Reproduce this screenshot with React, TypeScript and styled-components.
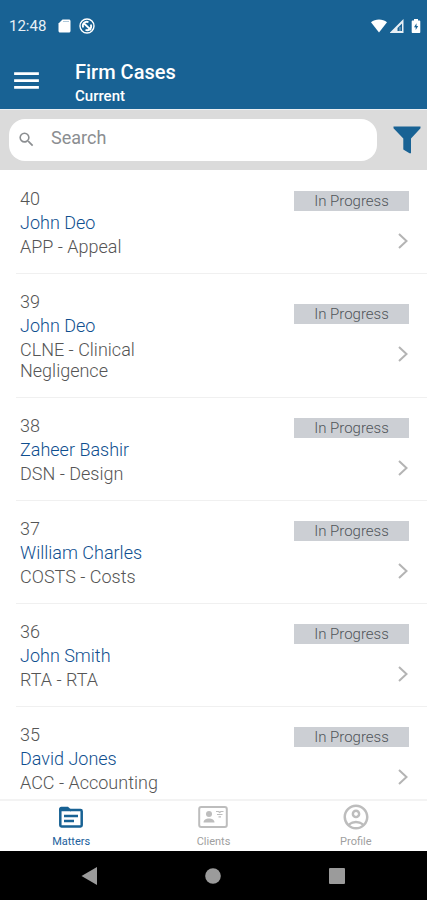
import React from "react";
import styled, { createGlobalStyle } from "styled-components";
import { MdMenu, MdSearch, MdOutlineAccountCircle } from "react-icons/md";

const blue = "#186294";

const GlobalStyle = createGlobalStyle`
  *, *::before, *::after { box-sizing: border-box; }
  body { margin: 0; background: #fff; font-family: Roboto, "Liberation Sans", sans-serif; }
  button { border: 0; padding: 0; margin: 0; background: none; font: inherit; color: inherit; cursor: pointer; }
  svg { display: block; }
`;

const Screen = styled.div`
  display: flex;
  flex-direction: column;
  height: 100vh;
  background: #fff;
`;

const StatusBar = styled.div`
  display: flex;
  align-items: center;
  flex: none;
  height: 52px;
  padding: 0 6px 0 9px;
  background: ${blue};
  color: #fff;
`;

const Clock = styled.time`
  font-size: 15px;
  line-height: 20px;
  color: #e8f0f6;
  margin-right: 12px;
`;

const StatusIcons = styled.div<{ $end?: boolean }>`
  display: flex;
  align-items: center;
  gap: ${(p) => (p.$end ? 3 : 8)}px;
  margin-left: ${(p) => (p.$end ? "auto" : "0")};
`;

const AppBar = styled.header`
  display: flex;
  align-items: center;
  flex: none;
  height: 57px;
  padding: 0 10px;
  gap: 32px;
  background: ${blue};
  color: #fff;
`;

const Titles = styled.div`
  display: flex;
  flex-direction: column;
  padding-top: 4px;
  gap: 2px;
`;

const Title = styled.h1`
  margin: 0;
  font-size: 20px;
  line-height: 24px;
  font-weight: 500;
`;

const Subtitle = styled.p`
  margin: 0;
  font-size: 15px;
  line-height: 20px;
  font-weight: 500;
`;

const SearchBar = styled.form`
  display: flex;
  align-items: center;
  flex: none;
  height: 61px;
  padding: 0 6px 1px 9px;
  gap: 16px;
  background: #dbdbdb;
  border-top: 1px solid #e9eef2;
`;

const SearchField = styled.label`
  display: flex;
  align-items: center;
  flex: 1;
  min-width: 0;
  height: 42px;
  padding: 0 16px 0 8px;
  gap: 15px;
  border-radius: 16px;
  background: #fff;
  color: #8b8e91;
`;

const SearchInput = styled.input`
  flex: 1;
  min-width: 0;
  height: 26px;
  padding: 0 0 4px;
  border: 0;
  outline: 0;
  background: none;
  font: 18px Roboto, "Liberation Sans", sans-serif;
  color: #555;
  &::placeholder { color: #8b8e91; opacity: 1; }
`;

const FilterButton = styled.button`
  color: ${blue};
`;

const CaseList = styled.ul`
  flex: 1;
  min-height: 0;
  margin: 0;
  padding: 1px 0 0;
  list-style: none;
  overflow-y: auto;
  scrollbar-width: none;
`;

const CaseRow = styled.li`
  display: flex;
  align-items: center;
  justify-content: space-between;
  margin-left: 16px;
  padding: 17px 18px 16px 4px;
  border-bottom: 1px solid #f0f0f0;
`;

const CaseInfo = styled.div`
  display: flex;
  flex-direction: column;
  gap: 3px;
  width: 144px;
`;

const CaseLine = styled.span<{ $client?: boolean }>`
  font-size: 18px;
  font-weight: 300;
  line-height: 21px;
  color: ${(p) => (p.$client ? "#0f4f8f" : "#555")};
`;

const CaseSide = styled.div`
  display: flex;
  flex-direction: column;
  align-items: flex-end;
  gap: 18px;
  padding-bottom: 2px;
`;

const Badge = styled.span`
  width: 115px;
  height: 20px;
  background: #cccfd4;
  color: #50555a;
  font-size: 15px;
  font-weight: 300;
  line-height: 21px;
  text-align: center;
`;

const OpenButton = styled.button`
  color: #b4b4b4;
`;

const TabBar = styled.nav`
  display: grid;
  grid-template-columns: repeat(3, 1fr);
  flex: none;
  height: 52px;
  border-top: 2px solid #f3f3f3;
  background: #fff;
`;

const Tab = styled.button<{ $active?: boolean }>`
  display: flex;
  flex-direction: column;
  align-items: center;
  padding-top: 1px;
  gap: 2px;
  font-size: 11px;
  line-height: 16px;
  color: ${(p) => (p.$active ? "#21609c" : "#a0a0a0")};
  svg { color: ${(p) => (p.$active ? blue : "#bdbdbd")}; }
`;

const SystemBar = styled.div`
  display: flex;
  align-items: center;
  justify-content: space-between;
  flex: none;
  height: 49px;
  padding: 0 81px;
  background: #000;
  color: #9b9b9b;
`;

const CardIcon = () => (
  <svg width="13" height="14" viewBox="0 0 13 14">
    <path d="M4.500.5H11c.8 0 1.500.7 1.500 1.500v10c0 .8-.7 1.500-1.500 1.500H2c-.8 0-1.500-.7-1.500-1.500V4.500z" fill="#fff" />
    <path d="M5 2.500h6" stroke={blue} strokeOpacity=".35" />
  </svg>
);

const FocusIcon = () => (
  <svg width="16" height="16" viewBox="0 0 16 16" fill="none" stroke="#fff">
    <circle cx="8" cy="8" r="7" strokeWidth="1.400" />
    <path d="M4.200 9.500A4 4 0 0 1 9.500 4.200M11.800 6.500A4 4 0 0 1 6.500 11.800" strokeWidth="1.800" />
    <path d="M4.500 5l7.500 7" strokeWidth="1.800" />
  </svg>
);

const WifiIcon = () => (
  <svg width="16" height="14" viewBox="0 0 16 14" fill="#fff">
    <path d="M0 3.200C2.200 1.400 5 .4 8 .4s5.800 1 8 2.800L8 13.400z" />
  </svg>
);

const SignalIcon = () => (
  <svg width="18" height="14" viewBox="0 0 18 14">
    <path d="M13.500 0v14H-.5z" fill="#fff" fillOpacity=".9" />
    <path d="M12 4.500V12H7.500V9z" fill={blue} />
    <path d="M10 8v4" stroke="#fff" strokeOpacity=".5" />
  </svg>
);

const BatteryIcon = () => (
  <svg width="10" height="14" viewBox="0 0 10 14">
    <path d="M3 0h4v1.500h1.300c.6 0 1 .4 1 1V13c0 .6-.4 1-1 1H1.700c-.6 0-1-.4-1-1V2.500c0-.6.4-1 1-1H3z" fill="#fff" />
    <path d="M5.500 4.200L3 8.300h1.700v2.700L7.200 7H5.500z" fill={blue} />
  </svg>
);

const FilterIcon = () => (
  <svg width="28" height="28" viewBox="0 0 28 28" fill="currentColor">
    <path d="M.5.500h27v1.800L18 12.500V27.300h-1.500L10.300 23.500v-11L.5 2.300z" />
  </svg>
);

const ChevronIcon = () => (
  <svg width="12" height="24" viewBox="0 0 12 24" fill="none" stroke="currentColor" strokeWidth="2">
    <path d="M2 5l7.500 7L2 19" />
  </svg>
);

const FolderIcon = () => (
  <svg width="30" height="30" viewBox="0 0 30 30" fill="none" stroke="currentColor">
    <path d="M4.300 8v15.200c0 .7.500 1.200 1.200 1.200h19c.7 0 1.200-.5 1.200-1.200V9.200c0-.7-.5-1.200-1.200-1.200H14" strokeWidth="2.500" />
    <path d="M3 9.300V7c0-1.300 1-2.300 2.300-2.300H12l3 2.700v1.900z" fill="currentColor" stroke="none" />
    <path d="M8 14h14M8 19h10" strokeWidth="2.300" />
  </svg>
);

const ContactCardIcon = () => (
  <svg width="30" height="30" viewBox="0 0 30 30" fill="currentColor">
    <rect x="1.200" y="5" width="27.600" height="20" rx="2" fill="none" stroke="currentColor" strokeWidth="2" />
    <circle cx="11" cy="12" r="3" />
    <path d="M5.500 20.500c0-2.600 2.700-4 5.500-4s5.500 1.400 5.500 4z" />
    <path d="M18 9.500h2.500l1.200 1 1.200-1H25.500M19 12.500h5.500M20.500 14.800h2.500" fill="none" stroke="currentColor" strokeWidth="1.200" />
  </svg>
);

const BackIcon = () => (
  <svg width="17" height="18" viewBox="0 0 17 18" fill="currentColor">
    <path d="M16 0v18L.5 9z" />
  </svg>
);

const HomeIcon = () => (
  <svg width="16" height="16" viewBox="0 0 16 16" fill="currentColor">
    <circle cx="8" cy="8" r="7.800" />
  </svg>
);

const RecentsIcon = () => (
  <svg width="18" height="18" viewBox="0 0 18 18" fill="currentColor">
    <rect x="1" y="1" width="16" height="16" rx="1" />
  </svg>
);

const cases = [
  { id: 40, client: "John Deo", matter: "APP - Appeal" },
  { id: 39, client: "John Deo", matter: "CLNE - Clinical Negligence" },
  { id: 38, client: "Zaheer Bashir", matter: "DSN - Design" },
  { id: 37, client: "William Charles", matter: "COSTS - Costs" },
  { id: 36, client: "John Smith", matter: "RTA - RTA" },
  { id: 35, client: "David Jones", matter: "ACC - Accounting" },
];

export default function App() {
  return (
    <Screen>
      <GlobalStyle />
      <StatusBar>
        <Clock>12:48</Clock>
        <StatusIcons>
          <CardIcon />
          <FocusIcon />
        </StatusIcons>
        <StatusIcons $end>
          <WifiIcon />
          <SignalIcon />
          <BatteryIcon />
        </StatusIcons>
      </StatusBar>
      <AppBar>
        <button type="button" aria-label="Menu">
          <MdMenu size={33} />
        </button>
        <Titles>
          <Title>Firm Cases</Title>
          <Subtitle>Current</Subtitle>
        </Titles>
      </AppBar>
      <SearchBar onSubmit={(e) => e.preventDefault()}>
        <SearchField>
          <MdSearch size={19} aria-hidden />
          <SearchInput type="text" placeholder="Search" aria-label="Search" />
        </SearchField>
        <FilterButton type="button" aria-label="Filter">
          <FilterIcon />
        </FilterButton>
      </SearchBar>
      <CaseList>
        {cases.map((c) => (
          <CaseRow key={c.id}>
            <CaseInfo>
              <CaseLine>{c.id}</CaseLine>
              <CaseLine $client>{c.client}</CaseLine>
              <CaseLine>{c.matter}</CaseLine>
            </CaseInfo>
            <CaseSide>
              <Badge>In Progress</Badge>
              <OpenButton type="button" aria-label={`Open case ${c.id}`}>
                <ChevronIcon />
              </OpenButton>
            </CaseSide>
          </CaseRow>
        ))}
      </CaseList>
      <TabBar>
        <Tab type="button" $active>
          <FolderIcon />
          Matters
        </Tab>
        <Tab type="button">
          <ContactCardIcon />
          Clients
        </Tab>
        <Tab type="button">
          <MdOutlineAccountCircle size={30} />
          Profile
        </Tab>
      </TabBar>
      <SystemBar>
        <button type="button" aria-label="Back"><BackIcon /></button>
        <button type="button" aria-label="Home"><HomeIcon /></button>
        <button type="button" aria-label="Recent apps"><RecentsIcon /></button>
      </SystemBar>
    </Screen>
  );
}
